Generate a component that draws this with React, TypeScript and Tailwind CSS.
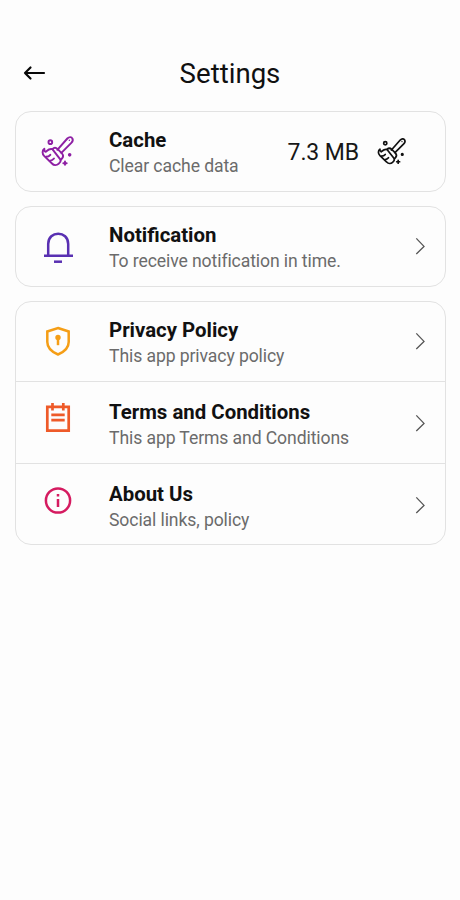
import type { ReactNode } from "react";

function Broom({ className }: { className: string }) {
  return (
    <svg viewBox="28 28 102 92" className={className} fill="none" stroke="currentColor" strokeWidth="5.8" strokeLinecap="round" strokeLinejoin="round">
      <circle cx="56" cy="46" r="5.5" />
      <path d="M77 69 107 35C113 29 120 30 122 35C125 40 123 44 119 48L89 78" />
      <path d="M113 40 113.1 40.1" strokeWidth="4" />
      <path d="M62 67Q70 59 78 67L90 79Q98 87 91 95L87 99Z" />
      <path d="M62 67C53 64 47 71 42 75C37 74 38 68 38 66C31 71 31 81 38 88L61 110C67 117 76 115 81 111C86 107 88 104 87 99" />
      <path d="M43 90C49 90 53 88 56 84M54 102C60 101 64 99 67 95" />
      <circle cx="114" cy="84" r="2.5" fill="currentColor" />
      <path d="M100 104V114M95 109H105" />
    </svg>
  );
}

function Bell() {
  return (
    <svg viewBox="0 0 52 52" className="size-[52px] text-[#5930b2]" fill="none" stroke="currentColor" strokeWidth="2.5">
      <path d="M16.2 34V23C16.2 9.2 36.2 9.2 36.2 23V34M12 34.8H41" />
      <path d="M22 40.7H30" />
    </svg>
  );
}

function Shield() {
  return (
    <svg viewBox="0 0 52 52" className="mb-[2px] size-[52px] shrink-0 text-[#f59e16]" fill="none" stroke="currentColor" strokeWidth="2.5">
      <path d="M26 13 36.7 16.5V27C36.7 33 32 37 26 39.5C20 37 15.3 33 15.3 27V16.5Z" />
      <circle cx="26" cy="22.4" r="2.7" fill="currentColor" stroke="none" />
      <path d="M26 23V30.2" />
    </svg>
  );
}

function Notepad() {
  return (
    <svg viewBox="0 0 52 52" className="mb-[11px] size-[52px] shrink-0 text-[#ee5a29]" fill="none" stroke="currentColor" strokeWidth="2.7">
      <path d="M15.3 14.8H36.7V38.6H15.3Z" />
      <path d="M20.5 11V18.5M31.3 11V18.5M19.3 22.8H32.7M19.3 28.1H32.7" />
    </svg>
  );
}

function Info() {
  return (
    <svg viewBox="0 0 52 52" className="mb-[10px] size-[52px] shrink-0 text-[#d51b60]" fill="none" stroke="currentColor" strokeWidth="2.5">
      <circle cx="26" cy="25.5" r="12.1" />
      <path d="M26 19V21.6M26 24V32" />
    </svg>
  );
}

function Chevron() {
  return (
    <svg viewBox="0 0 12 20" className="mr-[18px] h-5 w-3 shrink-0 text-[#555]" fill="none" stroke="currentColor" strokeWidth="1.3">
      <path d="M1.3 1.4 9 9.4 1.3 17" />
    </svg>
  );
}

function Row({ icon, title, detail, action, height = "h-[79px]" }: { icon: ReactNode; title: string; detail: string; action: ReactNode; height?: string }) {
  return (
    <div className={`flex items-center ${height}`}>
      <div className="ml-4 flex size-[52px] shrink-0 items-center justify-center">{icon}</div>
      <div className="ml-[25px] flex-1 pt-[2px] whitespace-nowrap">
        <h2 className="text-[20.4px] leading-[26px] font-bold text-[#111]">{title}</h2>
        <p className="text-[17.6px] leading-[26px] tracking-[-0.1px] text-[#6b6b6b]">{detail}</p>
      </div>
      {action}
    </div>
  );
}

const card = "rounded-[16px] border border-[#e2e2e2] bg-[#fdfdfd]";

export default function App() {
  return (
    <main className="min-h-[900px] w-full bg-[#fdfdfd] pt-[54px] font-['Roboto',sans-serif]">
      <header className="grid h-10 grid-cols-[80px_1fr_80px] items-center">
        <svg viewBox="0 0 24 16" className="-mt-[3px] ml-[22px] h-4 w-6" fill="none" stroke="#080808" strokeWidth="2.2" strokeLinecap="round" strokeLinejoin="round">
          <path d="M22 8H3M8.5 2.5 3 8 8.5 13.5" />
        </svg>
        <h1 className="text-center text-[27.6px] leading-10 text-[#101010]">Settings</h1>
      </header>
      <div className="mt-[17px] mr-[14px] ml-[15px] flex flex-col gap-[14px]">
        <section className={card}>
          <Row
            icon={<Broom className="h-[31px] w-[34px] text-[#8e20a4]" />}
            title="Cache"
            detail="Clear cache data"
            action={
              <div className="mr-[38px] flex items-center gap-[18px] whitespace-nowrap">
                <span className="pt-1 text-[23px] tracking-[-0.1px] text-[#171717]">7.3 MB</span>
                <Broom className="h-[27px] w-[30px] text-[#111]" />
              </div>
            }
          />
        </section>
        <section className={card}>
          <Row icon={<Bell />} title="Notification" detail="To receive notification in time." action={<Chevron />} />
        </section>
        <section className={`${card} divide-y divide-[#e2e2e2]`}>
          <Row icon={<Shield />} title="Privacy Policy" detail="This app privacy policy" action={<Chevron />} height="h-[80px]" />
          <Row icon={<Notepad />} title="Terms and Conditions" detail="This app Terms and Conditions" action={<Chevron />} height="h-[82px] pt-[2px]" />
          <Row icon={<Info />} title="About Us" detail="Social links, policy" action={<Chevron />} height="h-[80px] pt-[3px]" />
        </section>
      </div>
    </main>
  );
}
